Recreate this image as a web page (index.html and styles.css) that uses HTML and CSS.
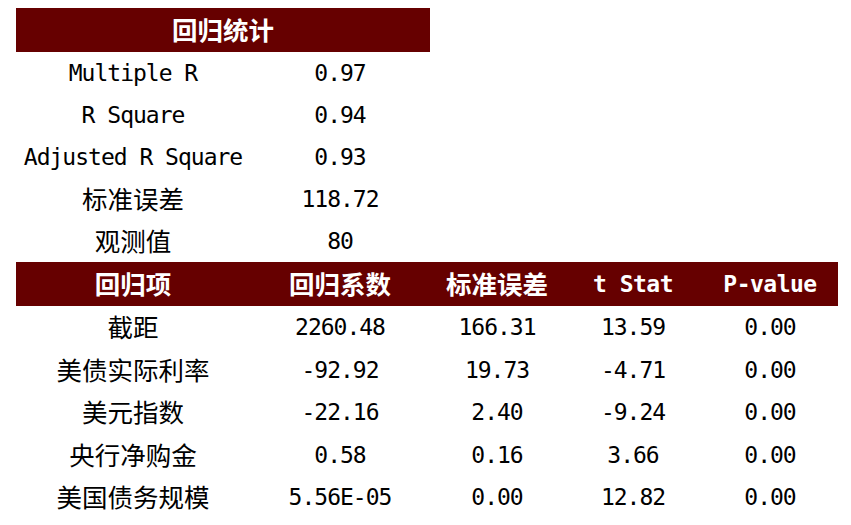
FILE: index.html
```html
<!DOCTYPE html>
<html lang="zh-CN">
<head>
<meta charset="utf-8">
<title>回归统计</title>
<link rel="stylesheet" href="styles.css">
</head>
<body>
<div class="sheet">
  <section class="stats">
    <div class="title cjk">回归统计</div>
    <div class="grid2">
      <div class="cell lat">Multiple R</div><div class="cell lat">0.97</div>
      <div class="cell lat">R Square</div><div class="cell lat">0.94</div>
      <div class="cell lat">Adjusted R Square</div><div class="cell lat">0.93</div>
      <div class="cell cjk">标准误差</div><div class="cell lat">118.72</div>
      <div class="cell cjk">观测值</div><div class="cell lat">80</div>
    </div>
  </section>
  <section class="coef">
    <div class="grid5 headrow">
      <div class="cell cjk">回归项</div>
      <div class="cell cjk">回归系数</div>
      <div class="cell cjk">标准误差</div>
      <div class="cell lat">t Stat</div>
      <div class="cell lat">P-value</div>
    </div>
    <div class="grid5 body">
      <div class="cell cjk">截距</div><div class="cell lat">2260.48</div><div class="cell lat">166.31</div><div class="cell lat">13.59</div><div class="cell lat">0.00</div>
      <div class="cell cjk">美债实际利率</div><div class="cell lat">-92.92</div><div class="cell lat">19.73</div><div class="cell lat">-4.71</div><div class="cell lat">0.00</div>
      <div class="cell cjk">美元指数</div><div class="cell lat">-22.16</div><div class="cell lat">2.40</div><div class="cell lat">-9.24</div><div class="cell lat">0.00</div>
      <div class="cell cjk">央行净购金</div><div class="cell lat">0.58</div><div class="cell lat">0.16</div><div class="cell lat">3.66</div><div class="cell lat">0.00</div>
      <div class="cell cjk">美国债务规模</div><div class="cell lat">5.56E-05</div><div class="cell lat">0.00</div><div class="cell lat">12.82</div><div class="cell lat">0.00</div>
    </div>
  </section>
</div>
</body>
</html>
```
FILE: styles.css
```css
html, body {
  margin: 0;
  padding: 0;
  background: #ffffff;
}
.sheet {
  padding: 8px 0 0 16px;
  color: #000000;
}
.cjk {
  font-family: "Noto Sans CJK SC", sans-serif;
  font-size: 25.5px;
  line-height: 1;
  padding-bottom: 3px;
  box-sizing: border-box;
}
.lat {
  font-family: "DejaVu Sans Mono", "Liberation Mono", monospace;
  font-size: 23px;
  letter-spacing: -1px;
}
.stats {
  width: 414px;
}
.title {
  height: 44px;
  background: #660000;
  color: #ffffff;
  font-weight: 700;
  display: flex;
  align-items: center;
  justify-content: center;
}
.grid2 {
  display: grid;
  grid-template-columns: 234px 180px;
  grid-auto-rows: 42px;
}
.cell {
  display: flex;
  align-items: center;
  justify-content: center;
  white-space: nowrap;
}
.grid5 {
  display: grid;
  grid-template-columns: 234px 180px 134px 138px 136px;
  width: 822px;
}
.headrow {
  height: 44px;
  background: #660000;
  color: #ffffff;
  font-weight: 700;
}
.headrow .lat {
  letter-spacing: -0.5px;
}
.body {
  grid-auto-rows: 42.5px;
}
```
